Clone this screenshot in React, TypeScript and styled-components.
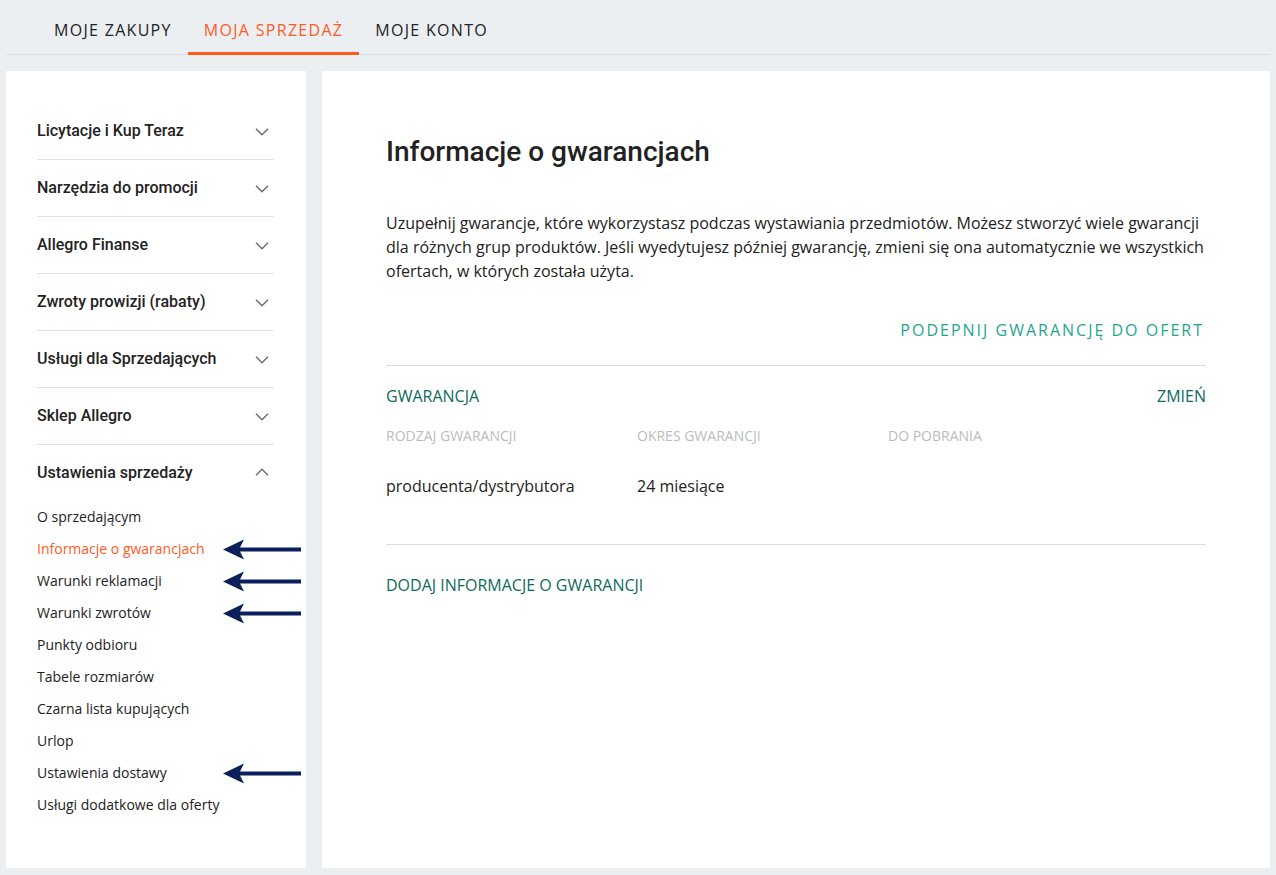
import styled, { createGlobalStyle } from "styled-components";

const GlobalStyle = createGlobalStyle`
  html, body {
    margin: 0;
    padding: 0;
    background: #eceff2;
  }
  body {
    font-family: "Open Sans", "Liberation Sans", sans-serif;
    color: #222;
  }
  * { box-sizing: border-box; }
`;

const sections = [
  "Licytacje i Kup Teraz",
  "Narzędzia do promocji",
  "Allegro Finanse",
  "Zwroty prowizji (rabaty)",
  "Usługi dla Sprzedających",
  "Sklep Allegro",
];

const subItems = [
  { label: "O sprzedającym" },
  { label: "Informacje o gwarancjach", active: true, arrow: true },
  { label: "Warunki reklamacji", arrow: true },
  { label: "Warunki zwrotów", arrow: true },
  { label: "Punkty odbioru" },
  { label: "Tabele rozmiarów" },
  { label: "Czarna lista kupujących" },
  { label: "Urlop" },
  { label: "Ustawienia dostawy", arrow: true },
  { label: "Usługi dodatkowe dla oferty" },
];

const Chevron = ({ up }: { up?: boolean }) => (
  <svg width="14" height="8" viewBox="0 0 14 8" fill="none">
    <path
      d={up ? "M1 7.2L7 1.2L13 7.2" : "M1 0.8L7 6.8L13 0.8"}
      stroke="#6b6b6b"
      strokeWidth="1.4"
    />
  </svg>
);

const Arrow = () => (
  <ArrowSvg width="78" height="21" viewBox="0 0 78 21">
    <path d="M0 10.5L21 0.5L17 8.5H78V12.5H17L21 20.5Z" fill="#0b1f5a" />
  </ArrowSvg>
);

const App = () => {
  return (
    <>
      <GlobalStyle />
      <Page>
        <TopNav>
          <Tab>MOJE ZAKUPY</Tab>
          <Tab $active>MOJA SPRZEDAŻ</Tab>
          <Tab>MOJE KONTO</Tab>
        </TopNav>
        <Layout>
          <Sidebar>
            {sections.map((s) => (
              <SectionRow key={s}>
                <SectionTitle>{s}</SectionTitle>
                <Chevron />
              </SectionRow>
            ))}
            <SectionRow $open>
              <SectionTitle>Ustawienia sprzedaży</SectionTitle>
              <Chevron up />
            </SectionRow>
            <SubList>
              {subItems.map((i) => (
                <SubItem key={i.label} $active={i.active}>
                  {i.label}
                  {i.arrow && <Arrow />}
                </SubItem>
              ))}
            </SubList>
          </Sidebar>
          <Main>
            <Title>Informacje o gwarancjach</Title>
            <Intro>
              Uzupełnij gwarancje, które wykorzystasz podczas wystawiania
              przedmiotów. Możesz stworzyć wiele gwarancji dla różnych grup
              produktów. Jeśli wyedytujesz później gwarancję, zmieni się ona
              automatycznie we wszystkich ofertach, w których została użyta.
            </Intro>
            <AttachRow>
              <AttachLink>PODEPNIJ GWARANCJĘ DO OFERT</AttachLink>
            </AttachRow>
            <Divider />
            <WarrantyHead>
              <DarkLink>GWARANCJA</DarkLink>
              <DarkLink>ZMIEŃ</DarkLink>
            </WarrantyHead>
            <Columns>
              <ColLabel>RODZAJ GWARANCJI</ColLabel>
              <ColLabel>OKRES GWARANCJI</ColLabel>
              <ColLabel>DO POBRANIA</ColLabel>
            </Columns>
            <Values>
              <Value>producenta/dystrybutora</Value>
              <Value>24 miesiące</Value>
              <Value />
            </Values>
            <Divider $gap={46} />
            <AddRow>
              <DarkLink>DODAJ INFORMACJE O GWARANCJI</DarkLink>
            </AddRow>
          </Main>
        </Layout>
      </Page>
    </>
  );
};

const Page = styled.div`
  padding: 0 6px 7px;
  min-height: 875px;
`;

const TopNav = styled.nav`
  display: flex;
  height: 55px;
  padding-left: 32px;
  border-bottom: 1px solid #d8dde2;
`;

const Tab = styled.div<{ $active?: boolean }>`
  display: flex;
  align-items: center;
  padding: 7px 16px 0;
  margin-bottom: -1px;
  font-size: 16px;
  letter-spacing: 1.3px;
  color: ${(p) => (p.$active ? "#ff5a1f" : "#222")};
  border-bottom: 3px solid ${(p) => (p.$active ? "#ff5a1f" : "transparent")};
`;

const Layout = styled.div`
  display: flex;
  gap: 16px;
  margin-top: 16px;
`;

const Sidebar = styled.aside`
  width: 300px;
  flex-shrink: 0;
  background: #fff;
  padding: 32px 32px 47px 31px;
`;

const SectionRow = styled.div<{ $open?: boolean }>`
  display: flex;
  align-items: center;
  justify-content: space-between;
  height: ${(p) => (p.$open ? "56px" : "57px")};
  padding: 0 5px 0 0;
  border-bottom: ${(p) => (p.$open ? "none" : "1px solid #dfe3e8")};
  svg {
    margin-top: ${(p) => (p.$open ? "-2px" : "1px")};
  }
`;

const SectionTitle = styled.span`
  font-family: Roboto, "Liberation Sans", sans-serif;
  font-weight: 500;
  font-size: 16px;
  margin-top: -2px;
  color: #222;
`;

const SubList = styled.ul`
  list-style: none;
  margin: 0;
  padding: 0;
`;

const SubItem = styled.li<{ $active?: boolean }>`
  position: relative;
  height: 32px;
  line-height: 32px;
  font-size: 14px;
  color: ${(p) => (p.$active ? "#ff5a1f" : "#222")};
`;

const ArrowSvg = styled.svg`
  position: absolute;
  left: 186px;
  top: 6px;
`;

const Main = styled.main`
  flex: 1;
  background: #fff;
  padding: 64px 64px 40px;
  min-height: 797px;
`;

const Title = styled.h1`
  margin: 0;
  font-family: Roboto, "Liberation Sans", sans-serif;
  font-weight: 500;
  font-size: 28px;
  line-height: 34px;
  color: #222;
`;

const Intro = styled.p`
  margin: 42px 0 0;
  font-size: 16px;
  line-height: 24px;
  color: #222;
`;

const AttachRow = styled.div`
  display: flex;
  justify-content: flex-end;
  margin-top: 35px;
  padding-right: 2px;
`;

const AttachLink = styled.span`
  font-size: 16px;
  line-height: 24px;
  letter-spacing: 2px;
  color: #1fa68c;
`;

const Divider = styled.hr<{ $gap?: number }>`
  margin: ${(p) => (p.$gap ?? 23)}px 0 0;
  border: none;
  border-top: 1px solid #dcdcdc;
`;

const WarrantyHead = styled.div`
  display: flex;
  justify-content: space-between;
  margin-top: 18px;
`;

const DarkLink = styled.span`
  font-size: 16px;
  line-height: 24px;
  color: #0d6b5c;
`;

const Columns = styled.div`
  display: grid;
  grid-template-columns: 251px 251px 1fr;
  margin-top: 18px;
`;

const ColLabel = styled.span`
  font-size: 14px;
  line-height: 20px;
  color: #bcbcbc;
`;

const Values = styled.div`
  display: grid;
  grid-template-columns: 251px 251px 1fr;
  margin-top: 28px;
`;

const Value = styled.span`
  font-size: 16px;
  line-height: 24px;
  color: #222;
`;

const AddRow = styled.div`
  margin-top: 28px;
`;

export default App;
